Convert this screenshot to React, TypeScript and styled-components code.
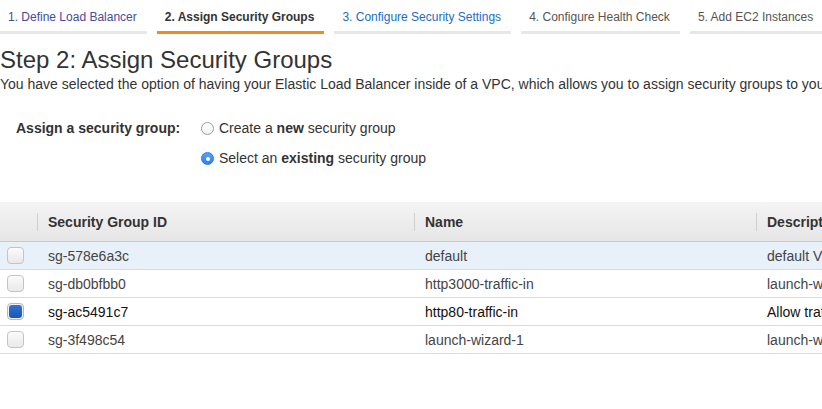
import React from "react";
import styled, { createGlobalStyle, css } from "styled-components";

const Global = createGlobalStyle`
  html, body { margin: 0; padding: 0; background: #fff; }
  body {
    font-family: "Liberation Sans", Arial, Helvetica, sans-serif;
    color: #333;
    overflow: hidden;
  }
`;

const Page = styled.div`
  width: 822px;
  height: 409px;
  overflow: hidden;
`;

type TabState = "visited" | "active" | "next" | "future";

const TabBar = styled.nav`
  display: flex;
  gap: 10px;
  white-space: nowrap;
`;

const Tab = styled.div<{ $state: TabState }>`
  flex: none;
  padding: 10px 10px 7px 8px;
  font-size: 12px;
  line-height: 14px;
  border-bottom: 3px solid #e7e7e7;
  color: #555;
  ${(p) =>
    p.$state === "visited" &&
    css`
      color: #434c9d;
    `}
  ${(p) =>
    p.$state === "active" &&
    css`
      color: #333;
      font-weight: bold;
      border-bottom-color: #f38b1c;
    `}
  ${(p) =>
    p.$state === "next" &&
    css`
      color: #1d6cc2;
    `}
`;

const Heading = styled.h1`
  margin: 12px 0 0;
  font-size: 24px;
  line-height: 28px;
  font-weight: normal;
  color: #333;
`;

const Lead = styled.p`
  margin: 2px 0 0;
  font-size: 14px;
  line-height: 17px;
  color: #333;
  white-space: nowrap;
`;

const Form = styled.div`
  display: grid;
  grid-template-columns: 185px auto;
  margin-top: 27px;
  padding-left: 16px;
`;

const FieldLabel = styled.div`
  font-size: 14px;
  line-height: 16px;
  font-weight: bold;
  color: #333;
`;

const Options = styled.div`
  display: flex;
  flex-direction: column;
  gap: 14px;
`;

const Option = styled.label`
  display: flex;
  align-items: center;
  gap: 5px;
  font-size: 14px;
  line-height: 16px;
  color: #333;
  b {
    font-weight: bold;
  }
`;

const Radio = styled.span<{ $checked?: boolean }>`
  flex: none;
  width: 13px;
  height: 13px;
  box-sizing: border-box;
  border-radius: 50%;
  display: flex;
  align-items: center;
  justify-content: center;
  margin-top: 1px;
  ${(p) =>
    p.$checked
      ? css`
          background: linear-gradient(#5aa2f7, #2f7fec);
          border: 1px solid #2c78e0;
          &::after {
            content: "";
            width: 4px;
            height: 4px;
            border-radius: 50%;
            background: #fff;
          }
        `
      : css`
          background: linear-gradient(#fff, #f2f2f2);
          border: 1px solid #9c9c9c;
        `}
`;

const TableWrap = styled.div`
  margin-top: 36px;
  width: 822px;
  overflow: hidden;
`;

const Table = styled.div`
  width: 1100px;
  display: grid;
  grid-template-columns: 37px 377px 342px 344px;
`;

const HeaderCell = styled.div<{ $divider?: boolean }>`
  position: relative;
  height: 39px;
  display: flex;
  align-items: center;
  padding-left: 11px;
  font-size: 14px;
  font-weight: bold;
  color: #333;
  background: linear-gradient(#f4f4f4, #e6e6e6);
  border-bottom: 1px solid #c9c9c9;
  ${(p) =>
    p.$divider &&
    css`
      &::before {
        content: "";
        position: absolute;
        left: 0;
        top: 11px;
        height: 18px;
        border-left: 1px solid #cfcfcf;
      }
    `}
`;

const Cell = styled.div<{ $highlight?: boolean; $strong?: boolean; $check?: boolean }>`
  height: 27px;
  display: flex;
  align-items: center;
  padding-left: ${(p) => (p.$check ? "7px" : "11px")};
  font-size: 14px;
  color: ${(p) => (p.$strong ? "#111" : "#444")};
  background: ${(p) => (p.$highlight ? "#e8f0fa" : "#fff")};
  border-bottom: 1px solid #dadada;
  white-space: nowrap;
  overflow: hidden;
`;

const Checkbox = styled.span<{ $checked?: boolean }>`
  width: 17px;
  height: 17px;
  box-sizing: border-box;
  border-radius: 4px;
  border: 1px solid #c4c4c4;
  background: linear-gradient(#fbfbfb, #e9e9e9);
  display: flex;
  align-items: center;
  justify-content: center;
  ${(p) =>
    p.$checked &&
    css`
      border-color: #b9b9b9;
      background: #f0f0f0;
      &::after {
        content: "";
        width: 13px;
        height: 13px;
        border-radius: 3px;
        background: linear-gradient(#2f72d3, #1a56b8);
      }
    `}
`;

const tabs: { label: string; state: TabState }[] = [
  { label: "1. Define Load Balancer", state: "visited" },
  { label: "2. Assign Security Groups", state: "active" },
  { label: "3. Configure Security Settings", state: "next" },
  { label: "4. Configure Health Check", state: "future" },
  { label: "5. Add EC2 Instances", state: "future" },
];

const rows = [
  { id: "sg-578e6a3c", name: "default", desc: "default VPC security group", highlight: true, checked: false },
  { id: "sg-db0bfbb0", name: "http3000-traffic-in", desc: "launch-wizard-2 created", highlight: false, checked: false },
  { id: "sg-ac5491c7", name: "http80-traffic-in", desc: "Allow traffic on port 80", highlight: false, checked: true },
  { id: "sg-3f498c54", name: "launch-wizard-1", desc: "launch-wizard-1 created", highlight: false, checked: false },
];

export default function App() {
  return (
    <Page>
      <Global />
      <TabBar>
        {tabs.map((t) => (
          <Tab key={t.label} $state={t.state}>
            {t.label}
          </Tab>
        ))}
      </TabBar>
      <Heading>Step 2: Assign Security Groups</Heading>
      <Lead>
        You have selected the option of having your Elastic Load Balancer inside of a VPC, which allows you to assign
        security groups to your load balancer.
      </Lead>
      <Form>
        <FieldLabel>Assign a security group:</FieldLabel>
        <Options>
          <Option>
            <Radio />
            <span>
              Create a <b>new</b> security group
            </span>
          </Option>
          <Option>
            <Radio $checked />
            <span>
              Select an <b>existing</b> security group
            </span>
          </Option>
        </Options>
      </Form>
      <TableWrap>
        <Table>
          <HeaderCell />
          <HeaderCell $divider>Security Group ID</HeaderCell>
          <HeaderCell $divider>Name</HeaderCell>
          <HeaderCell $divider>Description</HeaderCell>
          {rows.map((r) => (
            <React.Fragment key={r.id}>
              <Cell $check $highlight={r.highlight}>
                <Checkbox $checked={r.checked} />
              </Cell>
              <Cell $highlight={r.highlight} $strong={r.checked}>
                {r.id}
              </Cell>
              <Cell $highlight={r.highlight} $strong={r.checked}>
                {r.name}
              </Cell>
              <Cell $highlight={r.highlight} $strong={r.checked}>
                {r.desc}
              </Cell>
            </React.Fragment>
          ))}
        </Table>
      </TableWrap>
    </Page>
  );
}
